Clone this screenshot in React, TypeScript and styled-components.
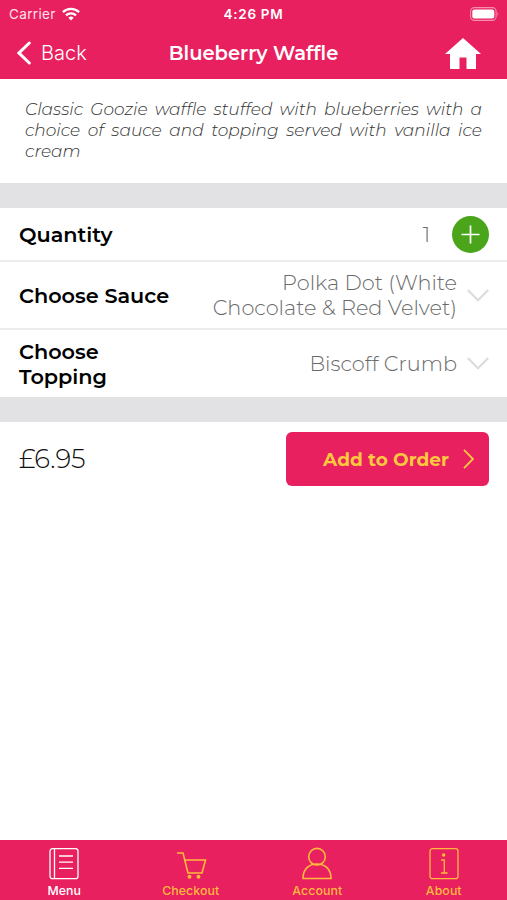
import React from 'react';
import styled, { createGlobalStyle } from 'styled-components';

const pink = '#e8205f';
const amber = '#ffb93c';

const GlobalStyle = createGlobalStyle`
  * { box-sizing: border-box; }
  body { margin: 0; background: #fff; }
`;

const Screen = styled.div`
  width: 507px;
  height: 900px;
  display: flex;
  flex-direction: column;
  background: #fff;
  overflow: hidden;
  font-family: Montserrat, Inter, sans-serif;
  color: #000;
`;

const Header = styled.header`
  height: 79px;
  background: ${pink};
  color: #fff;
`;

const StatusBar = styled.div`
  height: 27px;
  display: grid;
  grid-template-columns: 1fr auto 1fr;
  align-items: center;
  font-family: Inter, sans-serif;
  font-size: 13.5px;
`;

const Carrier = styled.div`
  display: flex;
  align-items: center;
  gap: 6px;
  padding-left: 9px;
  letter-spacing: 0.35px;
  color: #ffe3ec;
`;

const Clock = styled.div`
  font-weight: 600;
  font-size: 13.5px;
  letter-spacing: 0.7px;
`;

const BatterySlot = styled.div`
  display: flex;
  justify-content: flex-end;
  padding-right: 7px;
`;

const NavBar = styled.div`
  height: 52px;
  display: grid;
  grid-template-columns: 1fr auto 1fr;
  align-items: center;
`;

const BackButton = styled.div`
  display: flex;
  align-items: center;
  gap: 10px;
  padding-left: 17px;
  font-family: Inter, sans-serif;
  font-size: 20px;
  font-weight: 300;
`;

const Title = styled.h1`
  margin: 0;
  font-size: 19.5px;
  font-weight: 600;
`;

const HomeSlot = styled.div`
  display: flex;
  justify-content: flex-end;
  padding-right: 26px;
`;

const Description = styled.p`
  margin: 0;
  height: 104px;
  padding: 20px 25px 0;
  font-size: 17px;
  font-style: italic;
  font-weight: 300;
  line-height: 21px;
  text-align: justify;
  color: #333;
`;

const Divider = styled.div`
  height: 25px;
  background: #e2e2e4;
`;

const Row = styled.div<{ $height: number; $last?: boolean }>`
  height: ${p => p.$height}px;
  display: flex;
  align-items: center;
  justify-content: space-between;
  padding: 0 18px 0 19px;
  border-bottom: ${p => (p.$last ? 'none' : '2px solid #ededee')};
`;

const Label = styled.div<{ $width: number }>`
  width: ${p => p.$width}px;
  font-size: 20.8px;
  font-weight: 600;
  line-height: 25px;
`;

const Value = styled.div<{ $gap: number }>`
  display: flex;
  align-items: center;
  gap: ${p => p.$gap}px;
  font-size: 20.85px;
  font-weight: 300;
  line-height: 25px;
  text-align: right;
  color: #6a6a6a;
`;

const AddCircle = styled.div`
  width: 37px;
  height: 37px;
  border-radius: 50%;
  background: #4aa51b;
  display: flex;
  align-items: center;
  justify-content: center;
`;

const OrderBar = styled.div`
  flex: 1;
  display: flex;
  align-items: flex-start;
  justify-content: space-between;
  padding: 10px 18px 0 19px;
`;

const Price = styled.div`
  font-size: 26px;
  font-weight: 300;
  line-height: 54px;
  color: #111;
`;

const OrderButton = styled.div`
  width: 203px;
  height: 54px;
  border-radius: 6px;
  background: ${pink};
  color: #fdc83f;
  display: flex;
  align-items: center;
  justify-content: flex-end;
  gap: 14px;
  padding-right: 15px;
  font-size: 18.5px;
  font-weight: 700;
`;

const TabBar = styled.nav`
  height: 60px;
  display: grid;
  grid-template-columns: repeat(4, 1fr);
  padding: 7px 0 0 1px;
  background: ${pink};
  font-family: Inter, sans-serif;
`;

const Tab = styled.div<{ $active?: boolean }>`
  display: flex;
  flex-direction: column;
  align-items: center;
  gap: 2px;
  color: ${p => (p.$active ? '#fff' : amber)};
  font-size: 12.3px;
  font-weight: 500;
  line-height: 18px;
  letter-spacing: 0.1px;
`;

const Chevron = () => (
  <svg width="22" height="13" viewBox="0 0 22 13" fill="none" stroke="#dcdcdf" strokeWidth="2.200">
    <path d="M.8 1 11 11.2 21.2 1" />
  </svg>
);

const tabs = [
  {
    label: 'Menu',
    icon: (
      <>
        <rect x="2" y="1.7" width="28" height="30" rx="2.5" />
        <path d="M6.5 2v29.500M11 9h14M11 15.200h14M11 21.300h14" />
      </>
    ),
  },
  {
    label: 'Checkout',
    icon: (
      <>
        <path d="M2 6h6l5 20h14l3.500-13h-21" strokeWidth="1.6" />
        <circle cx="14.500" cy="29.700" r="1.300" fill="currentColor" />
        <circle cx="23.500" cy="29.700" r="1.300" fill="currentColor" />
      </>
    ),
  },
  {
    label: 'Account',
    icon: (
      <>
        <circle cx="16" cy="9.700" r="8.300" strokeWidth="1.6" />
        <path d="M2 31.500C2 22 8 17 16 17s14 5 14 14.500z" strokeWidth="1.6" />
      </>
    ),
  },
  {
    label: 'About',
    icon: (
      <>
        <rect x="2" y="1.7" width="28" height="30" rx="2.5" />
        <path d="M13 13h3.300v13M13 26h6.500" />
        <circle cx="15.700" cy="8" r="1.100" fill="currentColor" />
      </>
    ),
  },
];

export default function App() {
  return (
    <>
      <GlobalStyle />
      <Screen>
        <Header>
          <StatusBar>
            <Carrier>
              Carrier
              <svg width="18" height="14" viewBox="0 0 18 14" fill="none" stroke="#fff" strokeWidth="2.300">
                <path d="M.9 5.100a11.600 11.600 0 0 1 16.200 0M4 8.300a7.200 7.200 0 0 1 10 0" />
                <path d="M6.300 10.700a4 4 0 0 1 5.400 0L9 13.500z" fill="#fff" stroke="none" />
              </svg>
            </Carrier>
            <Clock>4:26 PM</Clock>
            <BatterySlot>
              <svg width="30" height="14" viewBox="0 0 30 14">
                <rect x=".6" y=".6" width="25.500" height="12.800" rx="3.800" fill="none" stroke="#f58fb0" strokeWidth="1.100" />
                <rect x="2.300" y="2.400" width="22" height="9.200" rx="2" fill="#fff" />
                <path d="M27.500 4.800q1.800 2.200 0 4.400z" fill="#f58fb0" />
              </svg>
            </BatterySlot>
          </StatusBar>
          <NavBar>
            <BackButton>
              <svg width="14" height="24" viewBox="0 0 14 24" fill="none" stroke="#fff" strokeWidth="3" strokeLinecap="round">
                <path d="M12.300 2 2 12l10.300 10" />
              </svg>
              Back
            </BackButton>
            <Title>Blueberry Waffle</Title>
            <HomeSlot>
              <svg width="36" height="31" viewBox="0 0 36 31" fill="#fff">
                <path d="M18 0 36 16h-5v15H21.500V19.500h-7V31H5V16H0z" />
              </svg>
            </HomeSlot>
          </NavBar>
        </Header>
        <Description>
          Classic Goozie waffle stuffed with blueberries with a choice of sauce and topping served with vanilla ice cream
        </Description>
        <Divider />
        <Row $height={54}>
          <Label $width={170}>Quantity</Label>
          <Value $gap={22}>
            1
            <AddCircle>
              <svg width="19" height="19" viewBox="0 0 19 19" stroke="#fff" strokeWidth="1.700">
                <path d="M9.500 .5v18M.5 9.500h18" />
              </svg>
            </AddCircle>
          </Value>
        </Row>
        <Row $height={68}>
          <Label $width={170}>Choose Sauce</Label>
          <Value $gap={10}>
            <span>Polka Dot (White<br />Chocolate &amp; Red Velvet)</span>
            <Chevron />
          </Value>
        </Row>
        <Row $height={67} $last>
          <Label $width={120}>Choose Topping</Label>
          <Value $gap={10}>
            <span>Biscoff Crumb</span>
            <Chevron />
          </Value>
        </Row>
        <Divider />
        <OrderBar>
          <Price>£6.95</Price>
          <OrderButton>
            Add to Order
            <svg width="11" height="20" viewBox="0 0 11 20" fill="none" stroke="currentColor" strokeWidth="1.800">
              <path d="m1 .8 9 9.200-9 9.200" />
            </svg>
          </OrderButton>
        </OrderBar>
        <TabBar>
          {tabs.map((tab, i) => (
            <Tab key={tab.label} $active={i === 0}>
              <svg width="32" height="33" viewBox="0 0 32 33" fill="none" stroke="currentColor" strokeWidth="1.300">
                {tab.icon}
              </svg>
              {tab.label}
            </Tab>
          ))}
        </TabBar>
      </Screen>
    </>
  );
}
